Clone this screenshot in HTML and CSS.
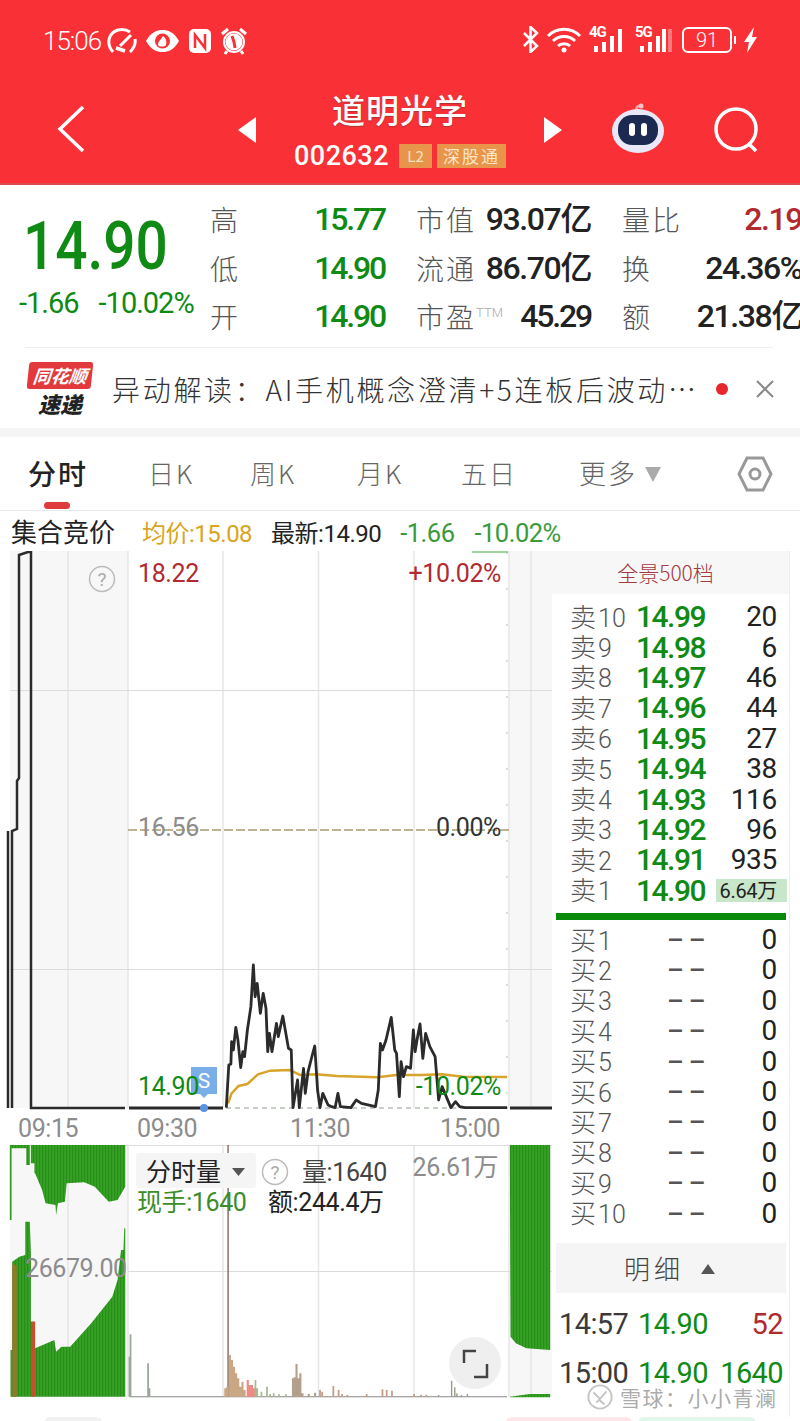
FILE: index.html
```html
<!DOCTYPE html>
<html lang="zh-CN">
<head>
    <meta charset="UTF-8">
    <meta name="viewport" content="width=device-width, initial-scale=1.0">
    <title>道明光学 002632</title>
    <link rel="stylesheet" href="styles.css">
</head>
<body>
    <header class="top-bar">
        <div class="status-bar">
            <div class="status-left">
                <span class="clock">15:06</span>
                <svg width="30" height="26" viewBox="0 0 30 26" fill="none" stroke="#fff" stroke-width="3"><path d="M6 24C-1 16 1 5 11 2c5-1 9 0 12 2"/><path d="M23 24c4-4 6-8 5-13"/><path d="M13 18L24 7"/><path d="M9 20l9 3" stroke-width="3.500"/></svg>
                <svg width="35" height="26" viewBox="0 0 35 26"><path d="M1 13C6 4 12 2 17.500 2S29 4 34 13c-5 9-11 11-16.500 11S6 22 1 13z" fill="#fff"/><circle cx="17.500" cy="13" r="7.500" fill="#f93036"/><path d="M13 17c0-4 3-5 5-9 3 2 4 5 3 9-1 2-7 2-8 0z" fill="#fff"/></svg>
                <svg width="24" height="26" viewBox="0 0 24 26"><rect x="1" y="1" width="22" height="24" rx="5" fill="#fff"/><path d="M7 20V7l10 13V6" fill="none" stroke="#f93036" stroke-width="2.500"/></svg>
                <svg width="28" height="28" viewBox="0 0 28 28" fill="none" stroke="#fff"><circle cx="14" cy="15" r="8.500" fill="#fff" stroke="none"/><circle cx="14" cy="15" r="10" stroke-width="2"/><path d="M12 9l2 6 1 6" stroke="#f93036" stroke-width="3"/><path d="M2 7l6-5M26 7l-6-5M7 24l-2 3M21 24l2 3" stroke-width="3"/></svg>
            </div>
            <div class="status-right">
                <svg class="bt-icon" width="17" height="27" viewBox="0 0 17 27" fill="none" stroke="#fff" stroke-width="2.500"><path d="M2 7l13 13-6.500 6V1L15 7 2 20"/></svg>
                <svg width="34" height="26" viewBox="0 0 34 26" fill="none" stroke="#fff" stroke-width="3"><path d="M1 9c9-9 23-9 32 0"/><path d="M6 14c6-6 16-6 22 0"/><path d="M11 19c3-3 9-3 12 0"/><circle cx="17" cy="23" r="2.500" fill="#fff" stroke="none"/></svg>
                <span class="net"><span class="net-label">4G</span><svg width="38" height="26" viewBox="0 0 38 26" fill="#fff"><rect x="5" y="19" width="4" height="6"/><rect x="13" y="15" width="4" height="10"/><rect x="21" y="9" width="4" height="16"/><rect x="29" y="2" width="4" height="23"/></svg></span>
                <span class="net"><span class="net-label">5G</span><svg width="38" height="26" viewBox="0 0 38 26" fill="#fff"><rect x="5" y="19" width="4" height="6"/><rect x="13" y="15" width="4" height="10"/><rect x="21" y="9" width="4" height="16"/><rect x="27" y="2" width="4" height="23"/><rect x="33" y="2" width="4" height="23" opacity=".35"/></svg></span>
                <span class="battery">91</span>
                <span class="battery-tip"></span>
                <svg width="15" height="26" viewBox="0 0 15 26" fill="#fff"><path d="M11 0L1 15h5l-2 11L14 10H9z"/></svg>
            </div>
        </div>
        <div class="nav-bar">
            <svg class="nav-back" width="28" height="48" viewBox="0 0 28 48" fill="none" stroke="#fff" stroke-width="3.500"><path d="M26 2L3 24l23 22"/></svg>
            <svg class="nav-prev" width="18" height="26" viewBox="0 0 18 26" fill="#fff"><path d="M18 0v26L0 13z"/></svg>
            <div class="stock-title">
                <h1>道明光学</h1>
                <div class="stock-code">
                    <span class="code">002632</span>
                    <span class="tag tag-l2">L2</span>
                    <span class="tag">深股通</span>
                </div>
            </div>
            <svg class="nav-next" width="18" height="26" viewBox="0 0 18 26" fill="#fff"><path d="M0 0v26L18 13z"/></svg>
            <svg class="nav-robot" width="56" height="50" viewBox="0 0 56 50">
                <path d="M27 10c-2-4 0-8 4-7" fill="none" stroke="#f3a0a8" stroke-width="2.500"/>
                <circle cx="31" cy="3" r="2.500" fill="#f6c4c8"/>
                <ellipse cx="28" cy="28" rx="26" ry="22" fill="#e9e8f8"/>
                <rect x="8" y="12" width="40" height="30" rx="14" fill="#1c2a52"/>
                <rect x="19" y="20" width="6" height="13" rx="3" fill="#fff"/>
                <rect x="31" y="20" width="6" height="13" rx="3" fill="#fff"/>
            </svg>
            <svg class="nav-search" width="48" height="46" viewBox="0 0 48 46" fill="none" stroke="#fff" stroke-width="3.500"><circle cx="23" cy="22" r="20"/><path d="M35 36l8 8"/></svg>
        </div>
    </header>

    <section class="quote">
        <div class="quote-price">
            <div class="last-price">14.90</div>
            <div class="quote-change"><span>-1.66</span><span>-10.02%</span></div>
        </div>
        <div class="quote-grid">
            <div class="cell"><span class="cell-label">高</span><span class="cell-value tight green">15.77</span></div>
            <div class="cell"><span class="cell-label">市值</span><span class="cell-value">93.07亿</span></div>
            <div class="cell"><span class="cell-label">量比</span><span class="cell-value red">2.19</span></div>
            <div class="cell"><span class="cell-label">低</span><span class="cell-value tight green">14.90</span></div>
            <div class="cell"><span class="cell-label">流通</span><span class="cell-value">86.70亿</span></div>
            <div class="cell"><span class="cell-label">换</span><span class="cell-value">24.36%</span></div>
            <div class="cell"><span class="cell-label">开</span><span class="cell-value tight green">14.90</span></div>
            <div class="cell"><span class="cell-label">市盈<sup class="ttm">TTM</sup></span><span class="cell-value tight">45.29</span></div>
            <div class="cell"><span class="cell-label">额</span><span class="cell-value">21.38亿</span></div>
        </div>
    </section>

    <section class="news">
        <div class="news-logo">
            <span class="logo-top">同花顺</span>
            <span class="logo-bottom">速递</span>
        </div>
        <p class="news-text">异动解读：AI手机概念澄清+5连板后波动…</p>
        <span class="news-dot"></span>
        <svg class="news-close" width="20" height="20" viewBox="0 0 20 20" stroke="#888" stroke-width="2"><path d="M2 2l16 16M18 2L2 18"/></svg>
    </section>

    <nav class="tabs">
        <span class="tab tab-active">分时</span>
        <span class="tab tab-day">日K</span>
        <span class="tab tab-week">周K</span>
        <span class="tab tab-month">月K</span>
        <span class="tab tab-five">五日</span>
        <span class="tab tab-more">更多<i class="more-arrow"></i></span>
        <svg class="tab-setting" width="36" height="36" viewBox="0 0 36 36" fill="none" stroke="#999" stroke-width="3"><path d="M10 2h16l8 16-8 16H10L2 18z"/><circle cx="18" cy="18" r="5"/></svg>
    </nav>

    <div class="info-row">
        <span class="info-title">集合竞价</span>
        <span class="info-avg">均价:15.08</span>
        <span class="info-new">最新:14.90</span>
        <span class="info-down">-1.66</span>
        <span class="info-down">-10.02%</span>
    </div>

    <main class="board">
        <!-- viewBox uses page coordinates so the chart can be read against the screen -->
        <svg class="chart" width="552" height="866" viewBox="0 551 552 866">
            <defs>
                <pattern id="bars" width="8.550" height="30" patternUnits="userSpaceOnUse">
                    <rect width="8.550" height="30" fill="#36a024"/>
                    <rect width="2.850" height="30" fill="#258c18"/>
                </pattern>
            </defs>

            <rect x="10" y="551" width="118" height="557" fill="#f7f7f7"/>
            <rect x="510" y="551" width="42" height="557" fill="#f7f7f7"/>
            <rect x="10" y="1145" width="118" height="252" fill="#f7f7f7"/>
            <rect x="510" y="1145" width="42" height="252" fill="#f7f7f7"/>

            <g stroke="#e6e6e6" stroke-width="1.500">
                <path d="M68 551V1108M128 551V1108M223 551V1108M318.500 551V1108M414 551V1108M509 551V1108M531 551V1108"/>
                <path d="M68 1145V1397M128 1145V1397M223 1145V1397M318.500 1145V1397M414 1145V1397M509 1145V1397M531 1145V1397"/>
            </g>
            <g stroke="#dcdcdc" stroke-width="1">
                <path d="M10 690.500H552M10 969.500H552M10 1145.500H552M128 1271.500H552"/>
            </g>

            <path d="M128 830H510" stroke="#a89a6c" stroke-width="1.500" stroke-dasharray="9 3"/>
            <path d="M226 1108H508" stroke="#8c9c8c" stroke-width="1" stroke-dasharray="5 4"/>
            <path d="M507 552V1100" stroke="#a9c9a4" stroke-width="1" stroke-dasharray="2 34"/>
            <path d="M472 552H508" stroke="#7cc47c" stroke-width="1.500"/>

            <path d="M8 1108V831M12 1108V831L17 829V781L19 778V555L28 552H31V1108H125" fill="none" stroke="#2b2b2b" stroke-width="2.500"/>
            <path d="M129 1108H223M510 1108H552" fill="none" stroke="#2b2b2b" stroke-width="3"/>

            <g transform="translate(0 940) scale(.3509 .3333)" fill="none">
                <polyline vector-effect="non-scaling-stroke" stroke="#d8a42c" stroke-width="2.500" points="650,490 660,460 680,438 705,432 735,403 770,392 825,390 855,405 900,403 960,408 1075,412 1130,405 1200,405 1260,403 1320,410 1445,411"/>
                <polyline vector-effect="non-scaling-stroke" stroke="#2b2b2b" stroke-width="2.800" stroke-linejoin="round" points="645,503 652,375 658,372 660,305 665,330 672,262 678,300 686,383 692,335 697,350 705,270 715,200 722,75 727,170 733,130 742,220 750,160 758,205 763,335 768,280 775,335 788,250 793,290 806,228 822,325 830,330 835,503 848,420 853,503 865,385 870,460 878,395 890,345 897,318 905,450 912,503 920,460 935,495 945,500 955,503 963,460 970,500 1000,503 1015,480 1030,490 1070,500 1078,450 1084,310 1090,330 1100,300 1115,232 1125,330 1130,340 1138,470 1143,365 1150,410 1158,380 1170,385 1178,270 1183,335 1190,290 1197,252 1205,355 1213,280 1225,320 1240,350 1250,480 1260,440 1285,503 1298,485 1310,500 1325,503 1445,503"/>
            </g>

            <path d="M191 1067h26v27h-9l-4 4-4-4h-9z" fill="#7aaee8"/>
            <text class="flag-text" x="204" y="1088">S</text>
            <circle cx="204" cy="1108" r="4" fill="#5a94e0"/>

            <g class="chart-text">
                <text x="138" y="582" fill="#b02a30">18.22</text>
                <text x="501" y="582" fill="#b02a30" text-anchor="end">+10.02%</text>
                <text x="138" y="836" fill="#8c8c8c">16.56</text>
                <text x="501" y="836" fill="#333" text-anchor="end">0.00%</text>
                <text x="138" y="1095" fill="#0f8a14">14.90</text>
                <text x="501" y="1095" fill="#0f8a14" text-anchor="end">-10.02%</text>
            </g>

            <circle cx="102" cy="579" r="12.500" fill="none" stroke="#bbb" stroke-width="1.500"/>
            <text class="help-mark" x="102" y="586">?</text>

            <g class="chart-axis">
                <text x="18" y="1137">09:15</text>
                <text x="137" y="1137">09:30</text>
                <text x="290" y="1137">11:30</text>
                <text x="440" y="1137">15:00</text>
            </g>

            <g transform="translate(0 1140) scale(.3509 .3333)">
                <path fill="url(#bars)" d="M28 15V240H33V25H75V75H85V15H88V70H98V100H100L120 150L130 190L158 195L160 225L165 190L185 185L190 130L240 127L270 140L310 185L335 180L357 140V15Z"/>
                <path fill="url(#bars)" d="M30 770V630H35V365L55 350L72 345V245H85L88 340V545H100V625L155 600L160 635L175 620L200 620L260 550L320 470L335 420L345 330L352 330L354 265L357 265V770Z"/>
                <path fill="#8f7a2c" d="M35 770V370L48 378V770Z"/>
                <path fill="#c4512e" d="M88 770V545H100V770Z"/>
                <path fill="url(#bars)" d="M1453 15H1568V630L1500 625L1470 610L1455 590Z"/>
                <path fill="url(#bars)" d="M1453 770L1510 762H1568V772H1453Z"/>

                <g fill="none">
                    <path stroke="#888" stroke-width="3" d="M369 770H1445"/>
                    <path stroke="#9aa79a" stroke-width="5" d="M372 770V583M369 770V650M422 770V670M426 770V745"/>
                    <path stroke="#84665c" stroke-width="4" d="M650 770V15"/>
                    <path stroke="#c9a784" stroke-width="6" d="M642 770V745M648 770V740M655 770V645M661 770V660M667 770V680M673 770V700M679 770V715M685 770V740M691 770V725M697 770V750"/>
                    <path stroke="#f08a84" stroke-width="6" d="M706 770V720M712 770V735M718 770V735M724 770V745"/>
                    <path stroke="#a9b890" stroke-width="5" d="M728 770V720M733 770V745M745 770V755M761 770V740M770 770V762M780 770V760M795 770V763M815 770V763"/>
                    <path stroke="#b3a08c" stroke-width="6" d="M835 770V715M840 770V712M845 770V672M850 770V715M856 770V700M862 770V760M880 770V762M898 770V758"/>
                    <path stroke="#c49a88" stroke-width="5" d="M912 770V750M918 770V755M950 770V738M965 770V750M975 770V762M990 770V765M1045 770V762M1090 770V748M1102 770V750M1117 770V752M1180 770V762M1200 770V764M1215 770V764"/>
                    <path stroke="#9a9a8c" stroke-width="4" d="M1250 770V765M1287 770V722M1296 770V742M1302 770V760M1315 770V765M1332 770V762"/>
                </g>
            </g>

            <rect x="136" y="1153" width="120" height="35" rx="3" fill="#f5f5f5"/>
            <text class="vol-title" x="146" y="1181">分时量</text>
            <path d="M232 1168h13l-6.500 8z" fill="#555"/>
            <circle cx="275" cy="1172" r="12.500" fill="none" stroke="#bbb" stroke-width="1.500"/>
            <text class="help-mark" x="275" y="1179">?</text>
            <g class="chart-text">
                <text x="302" y="1181" fill="#444">量:1640</text>
                <text x="498" y="1176" fill="#8c8c8c" text-anchor="end">26.61万</text>
                <text x="137" y="1211" fill="#3c8c28">现手:1640</text>
                <text x="268" y="1211" fill="#222">额:244.4万</text>
                <text x="25" y="1277" fill="#8c8c8c">26679.00</text>
            </g>

            <circle cx="475" cy="1363" r="26" fill="#eeeeee" opacity=".92"/>
            <path d="M476 1351h-12v12M474 1377h13v-13" fill="none" stroke="#444" stroke-width="2.500"/>
        </svg>

        <aside class="book">
            <div class="book-head">全景500档</div>
            <div class="book-side book-sell">
                <div class="book-row"><span class="level">卖<b>10</b></span><span class="price">14.99</span><span class="qty">20</span></div>
                <div class="book-row"><span class="level">卖<b>9</b></span><span class="price">14.98</span><span class="qty">6</span></div>
                <div class="book-row"><span class="level">卖<b>8</b></span><span class="price">14.97</span><span class="qty">46</span></div>
                <div class="book-row"><span class="level">卖<b>7</b></span><span class="price">14.96</span><span class="qty">44</span></div>
                <div class="book-row"><span class="level">卖<b>6</b></span><span class="price">14.95</span><span class="qty">27</span></div>
                <div class="book-row"><span class="level">卖<b>5</b></span><span class="price">14.94</span><span class="qty">38</span></div>
                <div class="book-row"><span class="level">卖<b>4</b></span><span class="price">14.93</span><span class="qty">116</span></div>
                <div class="book-row"><span class="level">卖<b>3</b></span><span class="price">14.92</span><span class="qty">96</span></div>
                <div class="book-row"><span class="level">卖<b>2</b></span><span class="price">14.91</span><span class="qty">935</span></div>
                <div class="book-row"><span class="level">卖<b>1</b></span><span class="price">14.90</span><span class="qty qty-bar">6.64万</span></div>
            </div>
            <div class="book-split"></div>
            <div class="book-side">
                <div class="book-row"><span class="level">买<b>1</b></span><span class="price empty">––</span><span class="qty">0</span></div>
                <div class="book-row"><span class="level">买<b>2</b></span><span class="price empty">––</span><span class="qty">0</span></div>
                <div class="book-row"><span class="level">买<b>3</b></span><span class="price empty">––</span><span class="qty">0</span></div>
                <div class="book-row"><span class="level">买<b>4</b></span><span class="price empty">––</span><span class="qty">0</span></div>
                <div class="book-row"><span class="level">买<b>5</b></span><span class="price empty">––</span><span class="qty">0</span></div>
                <div class="book-row"><span class="level">买<b>6</b></span><span class="price empty">––</span><span class="qty">0</span></div>
                <div class="book-row"><span class="level">买<b>7</b></span><span class="price empty">––</span><span class="qty">0</span></div>
                <div class="book-row"><span class="level">买<b>8</b></span><span class="price empty">––</span><span class="qty">0</span></div>
                <div class="book-row"><span class="level">买<b>9</b></span><span class="price empty">––</span><span class="qty">0</span></div>
                <div class="book-row"><span class="level">买<b>10</b></span><span class="price empty">––</span><span class="qty">0</span></div>
            </div>
            <div class="detail-head">明细<i class="detail-arrow"></i></div>
            <div class="detail-row"><span class="time">14:57</span><span class="detail-price">14.90</span><span class="detail-qty red">52</span></div>
            <div class="detail-row"><span class="time">15:00</span><span class="detail-price">14.90</span><span class="detail-qty green">1640</span></div>
        </aside>
    </main>

    <div class="bottom-tabs">
        <span class="pill-gray"></span>
        <span class="pill-sell"></span>
        <span class="pill-buy"></span>
    </div>

    <div class="watermark">
        <svg width="26" height="26" viewBox="0 0 28 28" fill="none" stroke="#c4c4c4" stroke-width="2"><circle cx="14" cy="14" r="12.500"/><path d="M7 9l7 7-4 4M21 8l-8 9 6 5"/></svg>
        <span>雪球：小小青澜</span>
    </div>
</body>
</html>
```

FILE: styles.css
```css
:root {
    --red-bar: #f93036;
    --green: #0f8a14;
    --red: #b02a30;
    --cn: "Noto Sans CJK SC", sans-serif;
    --num: Roboto, "Noto Sans CJK SC", sans-serif;
}

* {
    box-sizing: border-box;
}

html,
body {
    margin: 0;
    height: 1421px;
    overflow: hidden;
    background: #ffffff;
}

body {
    position: relative;
    font-family: var(--num);
    color: #222;
}

.green {
    color: var(--green);
}

.red {
    color: var(--red);
}

/* header */
.top-bar {
    height: 185px;
    background: var(--red-bar);
    border-bottom: 2px solid #dc4a4c;
    color: #ffffff;
}

.status-bar {
    height: 80px;
    padding: 26px 42px 0 43px;
    display: flex;
    justify-content: space-between;
    align-items: flex-start;
}

.status-left {
    display: flex;
    align-items: center;
    gap: 8px;
}

.clock {
    font-size: 26px;
    font-weight: 300;
    letter-spacing: -1px;
    margin-right: -2px;
}

.status-right {
    display: flex;
    align-items: center;
    gap: 8px;
}

.net {
    position: relative;
    display: block;
    width: 38px;
    height: 26px;
}

.net-label {
    position: absolute;
    top: -4px;
    left: 0;
    font-size: 15px;
    font-weight: 700;
    letter-spacing: -1px;
}

.net svg {
    display: block;
}

.battery {
    width: 50px;
    height: 26px;
    margin-left: 1px;
    border: 2px solid #ffffff;
    border-radius: 6px;
    font-size: 20px;
    font-weight: 300;
    line-height: 22px;
    text-align: center;
}

.battery-tip {
    width: 2px;
    height: 8px;
    margin-left: -6px;
    background: #ffffff;
}

.battery-tip + svg {
    margin-left: -1px;
}

.nav-bar {
    height: 103px;
    padding-left: 57px;
    display: flex;
    align-items: flex-start;
}

.nav-back {
    margin-top: 25px;
}

.nav-prev {
    margin: 37px 0 0 153px;
}

.stock-title {
    width: 288px;
    text-align: center;
}

.stock-title h1 {
    margin: 6px 0 0;
    font-family: var(--cn);
    font-size: 33px;
    font-weight: 500;
    line-height: 46px;
    letter-spacing: 1px;
    text-shadow: 0 1px 1px #a33;
}

.stock-code {
    display: flex;
    align-items: center;
    justify-content: center;
    height: 26px;
    gap: 5px;
    margin-top: 11px;
}

.code {
    font-size: 27px;
    font-weight: 500;
    letter-spacing: .5px;
    margin-right: 5px;
}

.tag {
    padding: 0 6px;
    height: 24px;
    background: #e8944a;
    color: #fbe5c8;
    font-family: var(--cn);
    font-size: 17px;
    line-height: 24px;
    letter-spacing: 2px;
}

.tag-l2 {
    width: 33px;
    padding: 0;
    text-align: center;
    font-size: 15px;
    letter-spacing: 0;
}

.nav-next {
    margin-top: 37px;
}

.nav-robot {
    margin: 23px 0 0 48px;
}

.nav-search {
    margin: 27px 0 0 47px;
}

/* quote */
.quote {
    height: 164px;
    display: flex;
    position: relative;
}

.quote::after {
    content: "";
    position: absolute;
    left: 25px;
    right: 27px;
    bottom: 1px;
    height: 1px;
    background: #eeeeee;
}

.quote-price {
    width: 210px;
    padding-left: 19px;
    flex: none;
}

.last-price {
    margin: 24px 0 0 4px;
    height: 76px;
    font-size: 66px;
    font-weight: 500;
    line-height: 76px;
    color: var(--green);
    transform: scaleX(.86);
    transform-origin: left;
}

.quote-change {
    display: flex;
    gap: 20px;
    margin-top: 3px;
    font-size: 29px;
    letter-spacing: -1px;
    line-height: 30px;
    color: var(--green);
}

.quote-grid {
    width: 610px;
    padding-top: 10px;
    display: grid;
    grid-template-columns: 175px 175px 200px;
    grid-auto-rows: 48.500px;
    column-gap: 31px;
}

.cell {
    display: flex;
    justify-content: space-between;
    align-items: center;
}

.cell:nth-child(3n) {
    padding-right: 20px;
}

.cell-label {
    font-family: var(--cn);
    font-size: 28px;
    font-weight: 300;
    line-height: 40px;
    letter-spacing: 2px;
    color: #555;
    white-space: nowrap;
}

.ttm {
    font-family: var(--num);
    font-size: 13px;
    letter-spacing: 0;
    color: #aaa;
    vertical-align: 11px;
    line-height: 0;
}

.cell-value {
    font-size: 32px;
    font-weight: 500;
    line-height: 40px;
    letter-spacing: -1.400px;
    white-space: nowrap;
}

.cell-value.tight {
    letter-spacing: -2.200px;
}

/* news strip */
.news {
    height: 79px;
    padding-left: 28px;
    display: flex;
    align-items: center;
}

.news-logo {
    width: 64px;
    height: 54px;
    flex: none;
    margin-right: 20px;
    text-align: center;
}

.logo-top {
    display: block;
    height: 27px;
    background: #e23a3c;
    border-radius: 3px;
    color: #fff;
    font-family: var(--cn);
    font-size: 18px;
    font-weight: 700;
    font-style: italic;
    line-height: 26px;
    transform: skewX(-6deg);
}

.logo-bottom {
    display: block;
    font-family: var(--cn);
    font-size: 22px;
    font-weight: 900;
    font-style: italic;
    line-height: 28px;
    color: #222;
}

.news-text {
    width: 590px;
    margin: 0;
    font-family: var(--cn);
    font-size: 28px;
    font-weight: 300;
    letter-spacing: 2.700px;
    color: #333;
    white-space: nowrap;
    overflow: hidden;
}

.news-dot {
    width: 12px;
    height: 12px;
    margin-left: 14px;
    border-radius: 50%;
    background: #e5272d;
}

.news-close {
    margin-left: 27px;
}

/* tabs */
.tabs {
    position: relative;
    height: 83px;
    border-top: 9px solid #f5f5f5;
    border-bottom: 1px solid #e8e8e8;
    font-family: var(--cn);
    font-size: 26px;
    font-weight: 300;
    color: #666;
}

.tab {
    position: absolute;
    top: 15px;
    line-height: 42px;
    letter-spacing: 2px;
    white-space: nowrap;
}

.tab-active {
    left: 28px;
    font-size: 28px;
    font-weight: 500;
    color: #222;
}

.tab-active::after {
    content: "";
    position: absolute;
    left: 16px;
    top: 50px;
    width: 26px;
    height: 7px;
    border-radius: 4px;
    background: #df3a3c;
}

.tab-day {
    left: 148px;
}

.tab-week {
    left: 250px;
}

.tab-month {
    left: 357px;
}

.tab-five {
    left: 461px;
}

.tab-more {
    left: 579px;
    font-size: 27px;
}

.more-arrow {
    display: inline-block;
    margin-left: 8px;
    border-left: 8px solid transparent;
    border-right: 8px solid transparent;
    border-top: 15px solid #aaa;
    vertical-align: 2px;
}

.tab-setting {
    position: absolute;
    left: 737px;
    top: 19px;
}

/* info row */
.info-row {
    height: 40px;
    display: flex;
    align-items: baseline;
    padding: 3px 0 0 11px;
    font-size: 24px;
    line-height: 34px;
    letter-spacing: -.5px;
}

.info-row span {
    margin-right: 19px;
    white-space: nowrap;
}

.info-row .info-title {
    font-family: var(--cn);
    font-size: 26px;
    letter-spacing: 0;
    margin-right: 27px;
}

.info-avg {
    color: #d9a520;
}

.info-row .info-down {
    color: #3a9a3a;
    font-size: 25.500px;
    margin-right: 20px;
}

/* chart + order book */
.board {
    height: 866px;
    display: flex;
}

.chart {
    display: block;
    flex: none;
}

.chart-text text,
.chart-axis text {
    font-family: var(--num);
    font-size: 25px;
    letter-spacing: -.4px;
}

.chart-axis text {
    fill: #8c8c8c;
}

.help-mark {
    font-family: var(--num);
    font-size: 19px;
    fill: #aaa;
    text-anchor: middle;
}

.flag-text {
    font-family: var(--num);
    font-size: 21px;
    fill: #fff;
    text-anchor: middle;
}

.vol-title {
    font-family: var(--cn);
    font-size: 25px;
    fill: #222;
}

.book {
    width: 238px;
    flex: none;
    border-right: 1px solid #eeeeee;
}

.book-head {
    height: 43px;
    padding-right: 10px;
    background: #f7f7f7;
    color: #a33a40;
    font-family: var(--cn);
    font-size: 21px;
    font-weight: 300;
    line-height: 43px;
    text-align: center;
}

.book-side {
    padding-left: 18px;
}

.book-sell {
    padding-top: 8px;
}

.book-row {
    height: 30.400px;
    display: flex;
    align-items: center;
    position: relative;
    line-height: 30px;
}

.level {
    width: 66px;
    font-family: var(--cn);
    font-size: 26px;
    font-weight: 300;
    color: #555;
    white-space: nowrap;
}

.level b {
    margin-left: 2px;
    font-family: var(--num);
    font-size: 25px;
    font-weight: 300;
}

.price {
    width: 69px;
    font-size: 30px;
    font-weight: 500;
    letter-spacing: -1.500px;
    color: var(--green);
}

.price.empty {
    padding-left: 31px;
    font-size: 26px;
    color: #555;
    letter-spacing: 5px;
    white-space: nowrap;
}

.qty {
    width: 72px;
    font-size: 28px;
    letter-spacing: -.3px;
    text-align: right;
    color: #222;
}

.qty-bar {
    position: absolute;
    left: 146px;
    width: 71px;
    height: 23px;
    padding-right: 10px;
    background: #c8e6c9;
    font-size: 20px;
    line-height: 24px;
}

.book-split {
    height: 7px;
    margin: 7px 3px 5px 4px;
    background: #0a8a0a;
}

.detail-head {
    height: 50px;
    margin: 14px 3px 0 4px;
    background: #f5f5f5;
    font-family: var(--cn);
    font-size: 26px;
    font-weight: 300;
    letter-spacing: 4px;
    line-height: 50px;
    color: #444;
    padding-left: 68px;
}

.detail-arrow {
    display: inline-block;
    margin-left: 17px;
    border-left: 7px solid transparent;
    border-right: 7px solid transparent;
    border-bottom: 10px solid #555;
    vertical-align: 5px;
}

.detail-row {
    height: 49px;
    padding: 0 6px 0 7px;
    display: flex;
    align-items: center;
    font-size: 29px;
    line-height: 34px;
    letter-spacing: -.6px;
}

.detail-head + .detail-row {
    margin-top: 7px;
}

.detail-row .time {
    width: 79px;
    color: #3a3a3a;
}

.detail-price {
    color: var(--green);
}

.detail-qty {
    margin-left: auto;
}

/* cut-off buttons under the board */
.bottom-tabs {
    height: 4px;
    position: relative;
    overflow: hidden;
}

.bottom-tabs span {
    position: absolute;
    top: 0;
    height: 10px;
    border-radius: 6px 6px 0 0;
}

.pill-gray {
    left: 44px;
    width: 58px;
    background: #f1f1f1;
}

.pill-sell {
    left: 506px;
    width: 126px;
    background: #fde7e8;
}

.pill-buy {
    left: 638px;
    width: 118px;
    background: #e2f7ec;
}

/* overlays along the bottom edge */
.watermark {
    position: absolute;
    left: 587px;
    top: 1387px;
    display: flex;
    align-items: center;
    gap: 7px;
    height: 20px;
    font-family: var(--cn);
    font-size: 21px;
    line-height: 20px;
    letter-spacing: 1.500px;
    color: rgba(160, 160, 160, .9);
    text-shadow: 0 0 2px #fff, 0 0 2px #fff;
    white-space: nowrap;
}
```
